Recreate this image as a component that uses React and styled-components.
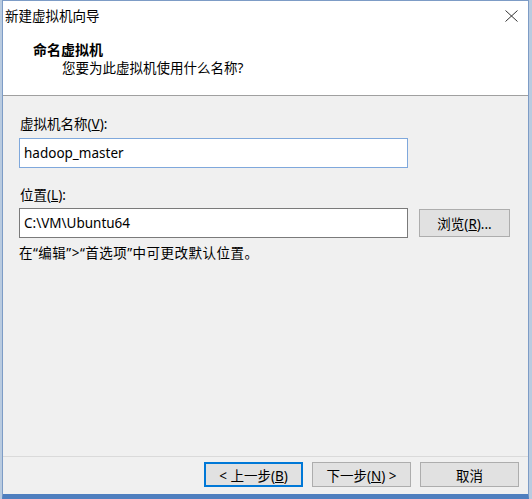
import React from "react";
import styled, { createGlobalStyle } from "styled-components";

const GlobalStyle = createGlobalStyle`
  html, body {
    margin: 0;
    padding: 0;
    background: #b9cbe0;
  }
  body {
    font-family: "Noto Sans", "Noto Sans CJK SC", sans-serif;
    font-size: 13.5px;
    color: #000;
  }
`;

const Window = styled.div`
  box-sizing: border-box;
  margin-left: 2px;
  width: 527px;
  height: 499px;
  display: flex;
  flex-direction: column;
  background: #f0f0f0;
  border: 1px solid #7d9cc6;
  border-bottom: 5px solid #4f7fbf;
`;

const TitleBar = styled.div`
  height: 29px;
  display: flex;
  align-items: center;
  justify-content: space-between;
  padding: 0 10px 0 2px;
  background: #fff;
`;

const Title = styled.span`
  font-size: 13.5px;
  line-height: 18px;
`;

const CloseButton = styled.button`
  border: none;
  background: transparent;
  padding: 0;
  width: 14px;
  height: 14px;
  display: flex;
  align-items: center;
  justify-content: center;
`;

const Header = styled.div`
  height: 66px;
  box-sizing: border-box;
  padding: 11px 0 0 30px;
  background: #fff;
  border-bottom: 1px solid #a0a0a0;
`;

const HeaderTitle = styled.div`
  font-weight: bold;
  font-size: 14px;
  line-height: 18px;
`;

const HeaderSub = styled.div`
  padding-left: 29px;
  line-height: 18px;
`;

const Body = styled.div`
  flex: 1;
  padding: 19px 16px 0 16px;
`;

const Label = styled.div`
  line-height: 18px;
  margin-top: ${(p) => p.$top || 0}px;
  padding-left: 1px;
`;

const Field = styled.div`
  display: flex;
  align-items: center;
  gap: 11px;
  margin-top: ${(p) => p.$top || 0}px;
`;

const TextBox = styled.input`
  box-sizing: border-box;
  width: 389px;
  height: 30px;
  padding: 0 4px;
  border: 1px solid ${(p) => (p.$active ? "#7fa8dc" : "#7a7a7a")};
  background: #fff;
  font-family: "Noto Sans", "Noto Sans CJK SC", sans-serif;
  font-size: 13.5px;
  color: #000;
  outline: none;
`;

const Button = styled.button`
  box-sizing: border-box;
  width: ${(p) => p.$width || 99}px;
  height: ${(p) => p.$height || 25}px;
  padding: 0;
  border: 1px solid ${(p) => (p.$primary ? "#0078d7" : "#adadad")};
  box-shadow: ${(p) => (p.$primary ? "inset 0 0 0 1px #0078d7" : "none")};
  background: #e1e1e1;
  font-family: "Noto Sans", "Noto Sans CJK SC", sans-serif;
  font-size: 13.5px;
  color: #000;
`;

const Hint = styled.div`
  line-height: 18px;
  margin-top: 6px;
  letter-spacing: 0.5px;
`;

const Footer = styled.div`
  display: flex;
  justify-content: flex-end;
  gap: 9px;
  padding: 5px 9px 0 0;
  height: 32px;
  border-top: 1px solid #dadada;
`;

const Key = styled.u``;

const CloseIcon = () => (
  <svg width="13" height="12" viewBox="0 0 13 12">
    <path d="M0.5 0.5 L12.5 11.5 M12.5 0.5 L0.5 11.5" stroke="#333" strokeWidth="1" fill="none" />
  </svg>
);

const App = () => {
  return (
    <>
      <GlobalStyle />
      <Window>
        <TitleBar>
          <Title>新建虚拟机向导</Title>
          <CloseButton>
            <CloseIcon />
          </CloseButton>
        </TitleBar>

        <Header>
          <HeaderTitle>命名虚拟机</HeaderTitle>
          <HeaderSub>您要为此虚拟机使用什么名称?</HeaderSub>
        </Header>

        <Body>
          <Label>
            虚拟机名称(<Key>V</Key>):
          </Label>
          <Field $top={5}>
            <TextBox $active defaultValue="hadoop_master" />
          </Field>

          <Label $top={18}>
            位置(<Key>L</Key>):
          </Label>
          <Field $top={4}>
            <TextBox defaultValue="C:\VM\Ubuntu64" />
            <Button $width={91} $height={28}>
              浏览(<Key>R</Key>)...
            </Button>
          </Field>

          <Hint>在“编辑”&gt;“首选项”中可更改默认位置。</Hint>
        </Body>

        <Footer>
          <Button $primary>
            &lt; 上一步(<Key>B</Key>)
          </Button>
          <Button>
            下一步(<Key>N</Key>) &gt;
          </Button>
          <Button>取消</Button>
        </Footer>
      </Window>
    </>
  );
};

export default App;
